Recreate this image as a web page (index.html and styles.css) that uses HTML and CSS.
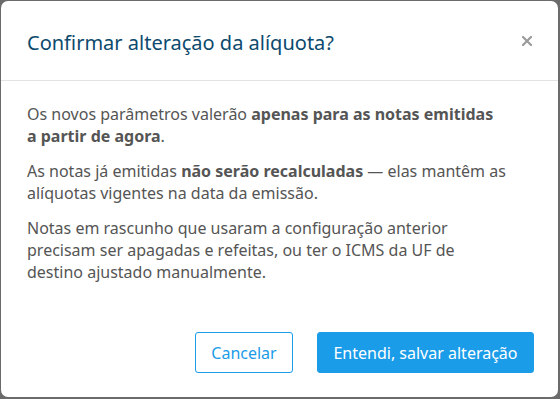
FILE: index.html
```html
<!DOCTYPE html>
<html lang="pt-BR">
<head>
<meta charset="utf-8">
<link rel="stylesheet" href="styles.css">
</head>
<body>
<div class="backdrop">
  <div class="modal">
    <div class="modal-header">
      <h2 class="modal-title">Confirmar alteração da alíquota?</h2>
      <button class="close" aria-label="Fechar">
        <svg width="10" height="10" viewBox="0 0 10 10"><path d="M1 1 L9 9 M9 1 L1 9" stroke="#9b9b9b" stroke-width="2.2" stroke-linecap="square"/></svg>
      </button>
    </div>
    <div class="modal-body">
      <p>Os novos parâmetros valerão <strong>apenas para as notas emitidas a partir de agora</strong>.</p>
      <p class="wide">As notas já emitidas <strong>não serão recalculadas</strong> — elas mantêm as alíquotas vigentes na data da emissão.</p>
      <p>Notas em rascunho que usaram a configuração anterior precisam ser apagadas e refeitas, ou ter o ICMS da UF de destino ajustado manualmente.</p>
    </div>
    <div class="modal-footer">
      <button class="btn btn-outline">Cancelar</button>
      <button class="btn btn-primary">Entendi, salvar alteração</button>
    </div>
  </div>
</div>
</body>
</html>
```

FILE: styles.css
```css
* { box-sizing: border-box; }
html, body { margin: 0; padding: 0; }
body {
  width: 560px;
  height: 399px;
  background: #6b6b6b;
  font-family: "Noto Sans", "Open Sans", sans-serif;
  overflow: hidden;
}
.backdrop {
  padding: 1px 2px 2px 1px;
  height: 399px;
}
.modal {
  background: #fff;
  border-radius: 7px;
  width: 557px;
  height: 396px;
  display: flex;
  flex-direction: column;
}
.modal-header {
  height: 80px;
  border-bottom: 1px solid #e3e3e3;
  display: flex;
  align-items: center;
  justify-content: space-between;
  padding: 0 26px 0 26px;
}
.modal-title {
  margin: 0;
  padding-top: 3px;
  font-size: 20px;
  font-weight: 400;
  color: #0d4a6e;
}
.close {
  border: 0;
  background: none;
  padding: 0;
  width: 10px;
  height: 10px;
  display: flex;
}
.modal-body {
  padding: 22px 26px 0 26px;
}
.modal-body p {
  margin: 0 0 13px 0;
  max-width: 478px;
  font-size: 16px;
  line-height: 22px;
  color: #555;
}
.modal-body p.wide {
  max-width: 500px;
}
.modal-body strong {
  font-weight: 700;
  color: #555;
}
.modal-footer {
  margin-top: auto;
  display: flex;
  justify-content: flex-end;
  gap: 24px;
  padding: 0 24px 24px 0;
}
.btn {
  font-family: "Noto Sans", "Open Sans", sans-serif;
  font-size: 16px;
  height: 41px;
  border-radius: 3px;
  padding: 0;
  white-space: nowrap;
  text-align: center;
  cursor: pointer;
}
.btn-outline {
  background: #fff;
  border: 1px solid #1b9ce8;
  color: #1b9ce8;
  width: 98px;
}
.btn-primary {
  background: #1b9ce8;
  border: 1px solid #1b9ce8;
  color: #fff;
  width: 217px;
}
```
